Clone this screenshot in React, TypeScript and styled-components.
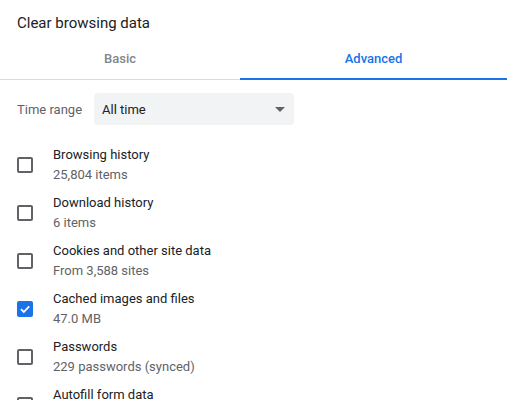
import React from "react";
import styled, { createGlobalStyle } from "styled-components";

const Global = createGlobalStyle`
  html, body { margin: 0; padding: 0; background: #fff; }
  body { font-family: Roboto, "Liberation Sans", Arial, sans-serif; color: #202124; }
`;

const Dialog = styled.div`
  width: 507px;
  height: 400px;
  overflow: hidden;
  background: #fff;
`;

const Title = styled.div`
  padding: 13px 17px 0;
  height: 26px;
  font-size: 15px;
  line-height: 20px;
  color: #202124;
`;

const TabBar = styled.div`
  display: grid;
  grid-template-columns: 240px 1fr;
  border-bottom: 1px solid #dadce0;
`;

const Tab = styled.div<{ $active?: boolean }>`
  height: 39px;
  margin-bottom: -1px;
  display: flex;
  align-items: center;
  justify-content: center;
  font-size: 13px;
  font-weight: 500;
  color: ${(p) => (p.$active ? "#1a73e8" : "#80868b")};
  border-bottom: 2px solid ${(p) => (p.$active ? "#1a73e8" : "transparent")};
`;

const RangeRow = styled.div`
  display: flex;
  align-items: center;
  padding: 13px 17px 0;
  gap: 0;
`;

const RangeLabel = styled.span`
  font-size: 13px;
  color: #5f6368;
  width: 77px;
`;

const Select = styled.div`
  width: 200px;
  height: 32px;
  box-sizing: border-box;
  background: #f1f3f4;
  border-radius: 4px;
  display: flex;
  align-items: center;
  justify-content: space-between;
  padding: 0 9px 0 8px;
  font-size: 13px;
  color: #202124;
`;

const Arrow = styled.span`
  width: 0;
  height: 0;
  border-left: 5px solid transparent;
  border-right: 5px solid transparent;
  border-top: 5px solid #5f6368;
  margin-right: 0;
`;

const List = styled.div`
  padding-top: 16px;
`;

const Row = styled.div`
  height: 48px;
  display: flex;
  align-items: center;
  padding-left: 17px;
`;

const Box = styled.div<{ $checked?: boolean }>`
  width: 16px;
  height: 16px;
  box-sizing: border-box;
  border-radius: 2px;
  border: 2px solid ${(p) => (p.$checked ? "#1a73e8" : "#5f6368")};
  background: ${(p) => (p.$checked ? "#1a73e8" : "transparent")};
  display: flex;
  align-items: center;
  justify-content: center;
  margin-right: 20px;
  flex-shrink: 0;
`;

const Texts = styled.div`
  display: flex;
  flex-direction: column;
`;

const Primary = styled.span`
  font-size: 13px;
  line-height: 20px;
  color: #202124;
`;

const Secondary = styled.span`
  font-size: 13px;
  line-height: 20px;
  color: #5f6368;
`;

const items = [
  { t: "Browsing history", s: "25,804 items", c: false },
  { t: "Download history", s: "6 items", c: false },
  { t: "Cookies and other site data", s: "From 3,588 sites", c: false },
  { t: "Cached images and files", s: "47.0 MB", c: true },
  { t: "Passwords", s: "229 passwords (synced)", c: false },
  { t: "Autofill form data", s: "", c: false },
];

export default function App() {
  return (
    <Dialog>
      <Global />
      <Title>Clear browsing data</Title>
      <TabBar>
        <Tab>Basic</Tab>
        <Tab $active>Advanced</Tab>
      </TabBar>
      <RangeRow>
        <RangeLabel>Time range</RangeLabel>
        <Select>
          <span>All time</span>
          <Arrow />
        </Select>
      </RangeRow>
      <List>
        {items.map((it) => (
          <Row key={it.t}>
            <Box $checked={it.c}>
              {it.c && (
                <svg width="12" height="12" viewBox="0 0 12 12">
                  <path d="M2 6.2 L4.8 9 L10.2 3.4" stroke="#fff" strokeWidth="1.8" fill="none" />
                </svg>
              )}
            </Box>
            <Texts>
              <Primary>{it.t}</Primary>
              <Secondary>{it.s || "\u00a0"}</Secondary>
            </Texts>
          </Row>
        ))}
      </List>
    </Dialog>
  );
}
